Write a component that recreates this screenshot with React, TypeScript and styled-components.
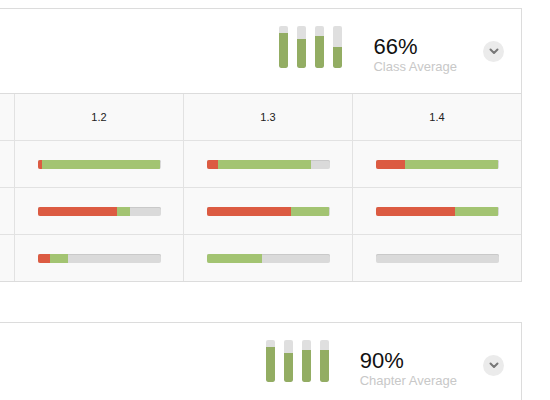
import React from "react";
import styled, { createGlobalStyle } from "styled-components";

const GlobalStyle = createGlobalStyle`
  * { box-sizing: border-box; }
  body {
    margin: 0;
    background: #fff;
    font-family: "Liberation Sans", Arial, sans-serif;
    color: #222;
  }
`;

const Page = styled.div`
  width: 522px;
  padding-top: 8px;
  display: flex;
  flex-direction: column;
  align-items: flex-end;
  gap: 40px;
  overflow: hidden;
`;

const Card = styled.section`
  flex-shrink: 0;
  width: 708px;
  border: 1px solid #dcdcdc;
  background: #fff;
`;

const Header = styled.header`
  height: 85px;
  display: flex;
  align-items: center;
  justify-content: flex-end;
  padding-right: 17px;
  border-bottom: 1px solid #dcdcdc;
`;

const Bars = styled.div`
  display: flex;
  gap: 9px;
  margin-right: 31px;
  margin-top: -9px;
`;

const Column = styled.div`
  width: 9px;
  height: 42px;
  border-radius: 2px;
  background: #dfdfdf;
  display: flex;
  align-items: flex-end;
  overflow: hidden;
`;

const ColumnFill = styled.div`
  width: 100%;
  background: #93ad63;
  border-radius: 0 0 2px 2px;
`;

const Summary = styled.div`
  display: flex;
  flex-direction: column;
  margin-right: 26px;
  margin-top: 7px;
`;

const Percent = styled.div`
  font-size: 22px;
  line-height: 25px;
  color: #111;
`;

const Caption = styled.div`
  font-size: 13px;
  line-height: 16px;
  color: #c8c8c8;
`;

const Toggle = styled.button`
  width: 21px;
  height: 21px;
  border: none;
  border-radius: 50%;
  background: #ebebeb;
  padding: 0;
  display: flex;
  align-items: center;
  justify-content: center;
  cursor: pointer;
`;

const Grid = styled.div`
  display: grid;
  grid-template-columns: 200px 169px 169px 168px;
  background: #f9f9f9;
`;

const Cell = styled.div<{ $last?: boolean; $bottom?: boolean }>`
  height: ${(p) => (p.$bottom ? 46 : 47)}px;
  border-right: ${(p) => (p.$last ? "none" : "1px solid #e2e2e2")};
  border-bottom: ${(p) => (p.$bottom ? "none" : "1px solid #e2e2e2")};
  display: flex;
  align-items: center;
  justify-content: center;
`;

const Label = styled.span`
  font-size: 11px;
  color: #222;
`;

const Track = styled.div`
  width: 123px;
  height: 9px;
  border-radius: 2px;
  background: #dadada;
  box-shadow: inset 0 1px 0 #c9c9c9;
  display: flex;
  overflow: hidden;
`;

const Segment = styled.div<{ $tone: "red" | "green" }>`
  height: 100%;
  background: ${(p) => (p.$tone === "red" ? "#dc5b42" : "#a3c472")};
`;

type Score = [number, number];

const columns = ["1.2", "1.3", "1.4"];

const rows: Score[][] = [
  [[4, 96], [9, 76], [24, 76]],
  [[65, 10], [69, 31], [65, 35]],
  [[10, 15], [0, 45], [0, 0]],
];

const Chevron = () => (
  <svg width="10" height="7" viewBox="0 0 10 7">
    <path
      d="M1.5 1.5 5 5l3.5-3.5"
      fill="none"
      stroke="#777"
      strokeWidth="2"
      strokeLinecap="round"
      strokeLinejoin="round"
    />
  </svg>
);

const CardHeader: React.FC<{ values: number[]; percent: string; caption: string }> = ({
  values,
  percent,
  caption,
}) => (
  <Header>
    <Bars>
      {values.map((v, i) => (
        <Column key={i}>
          <ColumnFill style={{ height: `${v}%` }} />
        </Column>
      ))}
    </Bars>
    <Summary>
      <Percent>{percent}</Percent>
      <Caption>{caption}</Caption>
    </Summary>
    <Toggle type="button" aria-label="Expand">
      <Chevron />
    </Toggle>
  </Header>
);

const Progress: React.FC<{ score: Score }> = ({ score }) => (
  <Track>
    {score[0] > 0 && <Segment $tone="red" style={{ width: `${score[0]}%` }} />}
    {score[1] > 0 && <Segment $tone="green" style={{ width: `${score[1]}%` }} />}
  </Track>
);

const App: React.FC = () => (
  <>
    <GlobalStyle />
    <Page>
      <Card>
        <CardHeader values={[81, 69, 74, 48]} percent="66%" caption="Class Average" />
        <Grid>
          <Cell />
          {columns.map((c, i) => (
            <Cell key={c} $last={i === columns.length - 1}>
              <Label>{c}</Label>
            </Cell>
          ))}
          {rows.map((row, r) => (
            <React.Fragment key={r}>
              <Cell $bottom={r === rows.length - 1} />
              {row.map((score, i) => (
                <Cell key={i} $last={i === row.length - 1} $bottom={r === rows.length - 1}>
                  <Progress score={score} />
                </Cell>
              ))}
            </React.Fragment>
          ))}
        </Grid>
      </Card>
      <Card>
        <CardHeader values={[81, 69, 76, 76]} percent="90%" caption="Chapter Average" />
      </Card>
    </Page>
  </>
);

export default App;
